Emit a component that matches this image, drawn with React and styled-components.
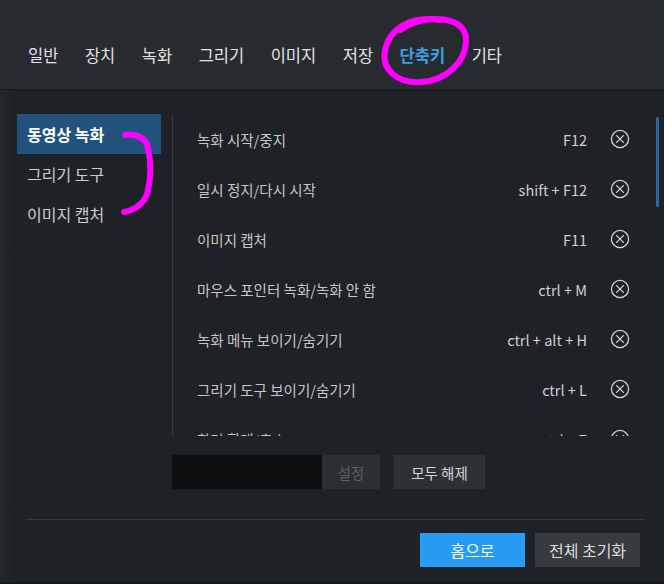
import React from "react";
import styled, { createGlobalStyle } from "styled-components";

const Global = createGlobalStyle`
  html, body { margin: 0; padding: 0; background: #1e2125; }
  * { box-sizing: border-box; }
  body { font-family: "Noto Sans CJK KR", "Noto Sans", sans-serif; }
`;

const Frame = styled.div`
  position: relative;
  width: 664px;
  height: 584px;
  display: flex;
  flex-direction: column;
  background: linear-gradient(90deg, #24272b 0px, #1e2125 14px);
  border-bottom: 2px solid #16181b;
  overflow: hidden;
`;

const Header = styled.nav`
  height: 90px;
  flex: none;
  display: flex;
  align-items: center;
  gap: 26.5px;
  padding: 21px 0 0 28px;
  background: #272b30;
  border-bottom: 1px solid #1a1c1f;
`;

const Tab = styled.div`
  font-size: 16.5px;
  line-height: 20px;
  color: ${(p) => (p.$active ? "#3d9ee2" : "#e2e2e2")};
  font-weight: ${(p) => (p.$active ? 700 : 400)};
  white-space: nowrap;
`;

const Body = styled.div`
  display: flex;
  padding-top: 24px;
`;

const Sidebar = styled.div`
  width: 172px;
  flex: none;
  padding: 0 11px 0 17px;
  display: flex;
  flex-direction: column;
`;

const SideItem = styled.div`
  height: 40px;
  display: flex;
  align-items: center;
  padding-left: 10px;
  font-size: 16px;
  color: ${(p) => (p.$active ? "#ffffff" : "#cbcbcb")};
  font-weight: ${(p) => (p.$active ? 700 : 400)};
  background: ${(p) => (p.$active ? "#22527b" : "transparent")};
`;

const Main = styled.div`
  flex: 1;
  display: flex;
  flex-direction: column;
`;

const ListPanel = styled.div`
  height: 322px;
  display: flex;
  border-left: 1px solid #383c41;
  overflow: hidden;
`;

const Rows = styled.div`
  flex: 1;
  display: flex;
  flex-direction: column;
`;

const Row = styled.div`
  height: 50px;
  flex: none;
  display: grid;
  grid-template-columns: 1fr auto 20px;
  align-items: center;
  column-gap: 23px;
  padding: 0 26px 0 24px;
`;

const Label = styled.span`
  font-size: 14.5px;
  color: #c6c6c6;
  white-space: nowrap;
`;

const Keys = styled.span`
  font-size: 14.5px;
  color: #cfcfcf;
  white-space: nowrap;
`;

const ScrollTrack = styled.div`
  width: 3px;
  margin: 3px 5px 0 0;
`;

const Thumb = styled.div`
  width: 3px;
  height: 90px;
  border-radius: 2px;
  background: #2a679b;
`;

const Controls = styled.div`
  display: flex;
  align-items: center;
  margin-top: 19px;
  height: 34px;
`;

const KeyInput = styled.div`
  width: 150px;
  height: 34px;
  background: #0e0f10;
`;

const Btn = styled.button`
  height: 34px;
  width: ${(p) => p.$w}px;
  margin-left: ${(p) => p.$ml || 0}px;
  border: none;
  padding: 0;
  font-family: inherit;
  font-size: ${(p) => p.$fs || 14.5}px;
  background: ${(p) => p.$bg};
  color: ${(p) => p.$fg};
  cursor: pointer;
`;

const Footer = styled.div`
  margin: 30px 19px 0 26px;
  border-top: 1px solid #34383d;
  padding: 13px 5px 0 0;
  display: flex;
  justify-content: flex-end;
  gap: 10px;
`;

const Overlay = styled.svg`
  position: absolute;
  left: 0;
  top: 0;
  pointer-events: none;
`;

const ClearIcon = () => (
  <svg width="20" height="20" viewBox="0 0 20 20">
    <circle cx="10" cy="10" r="8.6" fill="none" stroke="#d2d2d2" strokeWidth="1.3" />
    <path d="M6.6 6.6 L13.4 13.4 M13.4 6.6 L6.6 13.4" stroke="#d2d2d2" strokeWidth="1.3" strokeLinecap="round" />
  </svg>
);

const tabs = ["일반", "장치", "녹화", "그리기", "이미지", "저장", "단축키", "기타"];
const side = ["동영상 녹화", "그리기 도구", "이미지 캡처"];
const shortcuts = [
  ["녹화 시작/중지", "F12"],
  ["일시 정지/다시 시작", "shift + F12"],
  ["이미지 캡처", "F11"],
  ["마우스 포인터 녹화/녹화 안 함", "ctrl + M"],
  ["녹화 메뉴 보이기/숨기기", "ctrl + alt + H"],
  ["그리기 도구 보이기/숨기기", "ctrl + L"],
  ["화면 확대/축소", "ctrl + Z"],
];

export default function App() {
  return (
    <Frame>
      <Global />
      <Header>
        {tabs.map((t) => (
          <Tab key={t} $active={t === "단축키"}>{t}</Tab>
        ))}
      </Header>
      <Body>
        <Sidebar>
          {side.map((s, i) => (
            <SideItem key={s} $active={i === 0}>{s}</SideItem>
          ))}
        </Sidebar>
        <Main>
          <ListPanel>
            <Rows>
              {shortcuts.map(([l, k]) => (
                <Row key={l}>
                  <Label>{l}</Label>
                  <Keys>{k}</Keys>
                  <ClearIcon />
                </Row>
              ))}
            </Rows>
            <ScrollTrack>
              <Thumb />
            </ScrollTrack>
          </ListPanel>
          <Controls>
            <KeyInput />
            <Btn $w={58} $bg="#2b2f33" $fg="#5c6065">설정</Btn>
            <Btn $w={91} $ml={14} $bg="#2d3136" $fg="#d6d6d6">모두 해제</Btn>
          </Controls>
        </Main>
      </Body>
      <Footer>
        <Btn $w={105} $fs={16} $bg="#279cf2" $fg="#ffffff">홈으로</Btn>
        <Btn $w={105} $fs={16} $bg="#373b40" $fg="#dcdcdc">전체 초기화</Btn>
      </Footer>
      <Overlay width="664" height="584" viewBox="0 0 664 584">
        <path
          d="M440 20 C412 15 390 28 385 50 C381 70 398 84 422 82 C447 80 465 62 466 42 C467 26 454 18 432 19 C420 20 408 24 400 30"
          fill="none"
          stroke="#ff00ff"
          strokeWidth="6"
          strokeLinecap="round"
        />
        <path
          d="M125 135 C136 133 146 138 148 148 C151 162 151 180 147 194 C143 205 134 210 124 212"
          fill="none"
          stroke="#ff00ff"
          strokeWidth="6"
          strokeLinecap="round"
        />
      </Overlay>
    </Frame>
  );
}
